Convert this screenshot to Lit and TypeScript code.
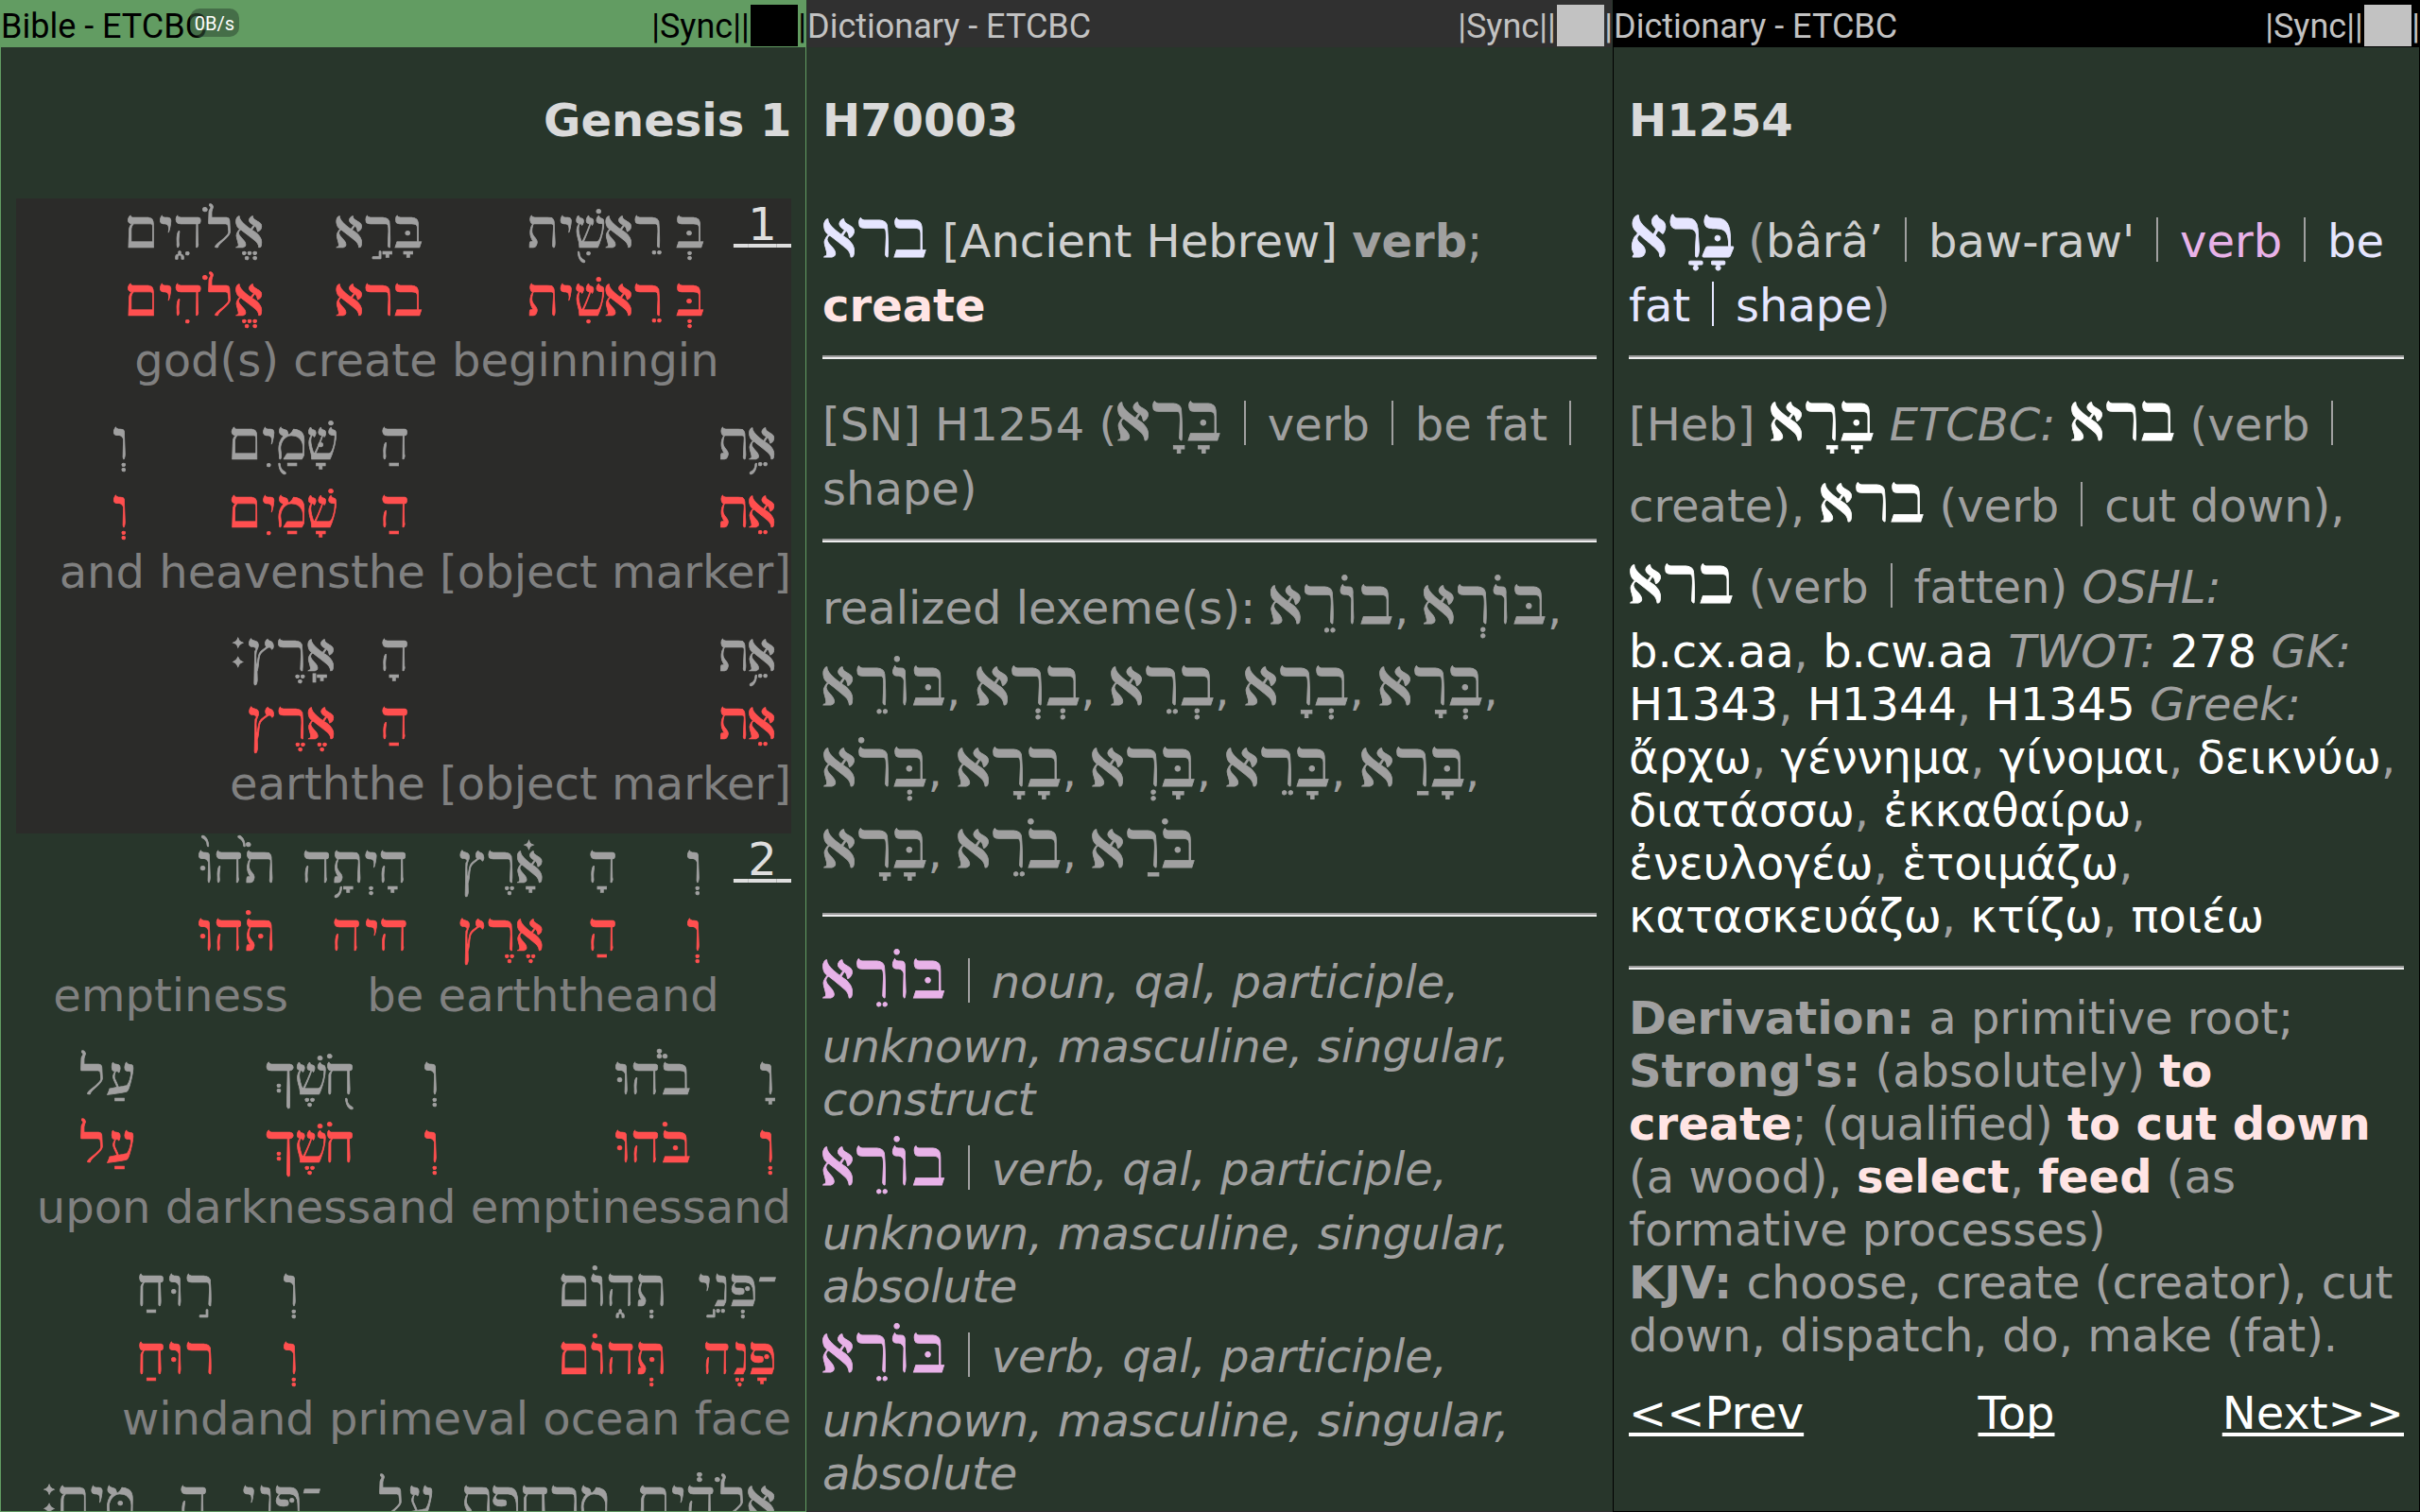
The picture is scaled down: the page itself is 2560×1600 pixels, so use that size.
import { LitElement, html, css, TemplateResult } from "lit";
import { customElement, property } from "lit/decorators.js";

type Word = { g: string; r?: string; e: string; join?: boolean; w?: number; s?: number };
type Row = { n?: string; words: Word[] };

const verses: { active?: boolean; rows: Row[] }[] = [
  {
    active: true,
    rows: [
      { n: "1", words: [
        { g: "בְּ", r: "בְּ", e: "in" },
        { g: "רֵאשִׁ֖ית", r: "רֵאשִׁית", e: "beginning", join: true },
        { g: "בָּרָ֣א", r: "ברא", e: "create" },
        { g: "אֱלֹהִ֑ים", r: "אֱלֹהִים", e: "god(s)", s: 1.035 },
      ] },
      { words: [
        { g: "אֵ֥ת", r: "אֵת", e: "[object marker]", s: 1 },
        { g: "הַ", r: "הַ", e: "the" },
        { g: "שָּׁמַ֖יִם", r: "שָׁמַיִם", e: "heavens", join: true },
        { g: "וְ", r: "וְ", e: "and" },
      ] },
      { words: [
        { g: "אֵ֥ת", r: "אֵת", e: "[object marker]", s: 1 },
        { g: "הָ", r: "הַ", e: "the" },
        { g: "אָֽרֶץ׃", r: "אֶרֶץ", e: "earth", join: true },
      ] },
    ],
  },
  {
    rows: [
      { n: "2", words: [
        { g: "וְ", r: "וְ", e: "and" },
        { g: "הָ", r: "הַ", e: "the", join: true },
        { g: "אָ֗רֶץ", r: "אֶרֶץ", e: "earth", join: true, s: 0.985 },
        { g: "הָיְתָ֥ה", r: "היה", e: "be", w: 128 },
        { g: "תֹ֨הוּ֙", r: "תֹּהוּ", e: "emptiness" },
      ] },
      { words: [
        { g: "וָ", r: "וְ", e: "and" },
        { g: "בֹ֔הוּ", r: "בֹּהוּ", e: "emptiness", join: true },
        { g: "וְ", r: "וְ", e: "and" },
        { g: "חֹ֖שֶׁךְ", r: "חֹשֶׁךְ", e: "darkness", join: true, s: 1.05 },
        { g: "עַל", r: "עַל", e: "upon", s: 1.03 },
      ] },
      { words: [
        { g: "־פְּנֵ֣י", r: "פָּנֶה", e: "face", s: 0.95 },
        { g: "תְה֑וֹם", r: "תְּהוֹם", e: "primeval ocean", s: 0.995 },
        { g: "וְ", r: "וְ", e: "and" },
        { g: "ר֣וּחַ", r: "רוּחַ", e: "wind", join: true, s: 1 },
      ] },
      { words: [
        { g: "אֱלֹהִ֔ים", e: "god(s)", w: 161, s: 1.035 },
        { g: "מְרַחֶ֖פֶת", e: "shake", w: 170 },
        { g: "עַל", e: "upon", s: 1.03 },
        { g: "־פְּנֵ֥י", e: "face", join: true, s: 0.95 },
        { g: "הַ", e: "the" },
        { g: "מָּֽיִם׃", e: "water", join: true },
      ] },
    ],
  },
];

const base = css`
  :host {
    display: block;
    box-sizing: border-box;
    font-family: "DejaVu Sans", sans-serif;
    font-size: 48px;
    line-height: 56px;
    color: #a0a0a0;
  }
  .he {
    display: inline-block;
    font-family: FreeSerif, "Liberation Serif", serif;
    line-height: 0;
    direction: rtl;
    unicode-bidi: isolate;
    white-space: nowrap;
    transform-origin: 100% 50%;
  }
`;

@customElement("pane-bar")
class PaneBar extends LitElement {
  @property() label = "";
  @property() speed = "";
  static styles = css`
    :host {
      display: flex;
      justify-content: space-between;
      position: relative;
      height: 50px;
      box-sizing: border-box;
      padding: 7px 0 0 1px;
      font: 36px/42px Roboto, sans-serif;
      white-space: pre;
      overflow: hidden;
    }
    .tools { display: flex; }
    .block {
      width: 50px;
      height: 44px;
      margin: -2px 0.5px 0 1px;
      background: currentColor;
    }
    .speed {
      position: absolute;
      left: 201px;
      top: 9px;
      width: 52px;
      height: 30px;
      border-radius: 10px;
      background: rgba(50, 80, 55, 0.6);
      color: #fff;
      font: 20px/33px Roboto, sans-serif;
      text-align: center;
    }
  `;
  render() {
    return html`<span>${this.label}</span>
      <span class="tools">|Sync||<span class="block"></span>|</span>
      ${this.speed ? html`<span class="speed">${this.speed}</span>` : ""}`;
  }
}

@customElement("bible-pane")
class BiblePane extends LitElement {
  static styles = [base, css`
    .title {
      margin: 49px 14.5px 55px;
      text-align: right;
      font-weight: bold;
      color: #dadada;
    }
    .verse { margin: 0 15px 0 16px; }
    .active { background: #2b2b29; }
    .row {
      display: flex;
      direction: rtl;
      height: 224px;
      white-space: nowrap;
    }
    .num {
      margin-top: -1px;
      height: 56px;
      white-space: pre;
      color: #dedede;
      text-decoration: underline;
      text-decoration-thickness: 4px;
      text-underline-offset: 4px;
      text-decoration-skip-ink: none;
    }
    .cell { margin-right: 15.3px; }
    .join, .first { margin-right: 0; }
    .g, .r {
      height: 70px;
      line-height: 70px;
      margin-bottom: 2px;
      padding-right: 15.3px;
      width: 0;
    }
    .he { font-size: 57px; -webkit-text-stroke: 0.7px currentColor; }
    .r { color: #ff4f4f; margin-bottom: 1px; }
    .e { direction: ltr; text-align: right; color: #808080; }
  `];
  render() {
    return html`
      <div class="title">Genesis 1</div>
      ${verses.map((v) => html`<div class="verse ${v.active ? "active" : ""}">
        ${v.rows.map((row) => html`<div class="row">
          ${row.n ? html`<div class="num">${" " + row.n + " "}</div>` : ""}
          ${row.words.map((w, i) => {
            const scale = `transform:scaleX(${w.s ?? 1.02})`;
            return html`<div
              class="cell ${w.join ? "join" : ""} ${i === 0 && !row.n ? "first" : ""}"
              style=${w.w ? `min-width:${w.w}px` : ""}>
              <div class="g"><span class="he" style=${scale}>${w.g}</span></div>
              <div class="r">${w.r ? html`<span class="he" style=${scale}>${w.r}</span>` : ""}</div>
              <div class="e">${w.e}</div>
            </div>`;
          })}
        </div>`)}
      </div>`)}`;
  }
}

const he = (t: string, cls = "", w = 111.6) =>
  html`<span class="he lex ${cls}" style="width:${w}px;transform:scaleX(${w > 120 ? 0.975 : 1.005})">${t}</span>`;
const bar = html`<span class="bar">|</span>`;
const line = (c: unknown, h = false): TemplateResult =>
  html`<div class="line ${h ? "tall" : ""}">${c}</div>`;

const dict = css`
  .title { margin: 49px 0 54px; font-weight: bold; color: #dadada; }
  .body { padding: 0 16px; white-space: pre; }
  .line { height: 56px; }
  .tall { padding: 18px 0 12px; }
  .rule {
    height: 0;
    margin: 25px 0 23px;
    border-top: 2px solid #9a9a9a;
    border-bottom: 2px solid #eee;
  }
  .lex { font-size: 69px; -webkit-text-stroke: 0.8px currentColor; }
  .bar {
    display: inline-block;
    overflow: hidden;
    width: 17.3px;
    height: 47px;
    vertical-align: -5px;
    line-height: 47px;
    -webkit-text-fill-color: transparent;
    background: linear-gradient(currentColor, currentColor) 50% 0 / 2px 100% no-repeat;
  }
  .lav { color: #e6e6ff; }
  .strong { font-weight: bold; }
  .pink { color: #e8b2e8; }
  .rose { color: #ffe4e4; font-weight: bold; }
  .lt { color: #cfcfcf; }
  .wh { color: #fff; }
  .nav { display: grid; grid-template-columns: repeat(3, 1fr); margin-top: 26px; color: #fff; }
  .nav div:nth-child(2) { text-align: center; }
  .nav div:nth-child(3) { text-align: right; }
  .nav span {
    text-decoration: underline;
    text-decoration-thickness: 4px;
    text-underline-offset: 4px;
    text-decoration-skip-ink: none;
  }
`;

@customElement("lexeme-pane")
class LexemePane extends LitElement {
  static styles = [base, dict];
  render() {
    const list = (...ws: [string, number?][]) =>
      ws.map(([t, w], i) => html`${i ? " " : ""}${he(t, "", w)},`);
    return html`<div class="body"><div class="title">H70003</div>${[
      line(html`${he("ברא", "lav")} <span class="lt">[Ancient Hebrew]</span> <b>verb</b>;`, true),
      line(html`<span class="rose">create</span>`),
      html`<div class="rule"></div>`,
      line(html`[SN] H1254 (${he("בָּרָא")} ${bar} verb ${bar} be fat ${bar}`, true),
      line("shape)"),
      html`<div class="rule"></div>`,
      line(html`realized lexeme(s): ${list(["בוֹרֵא", 131.5], ["בּוֹרְא", 131.5])}`, true),
      line(list(["בּוֹרֵא", 131], ["בְרְא"], ["בְרֵא"], ["בְרָא"], ["בְּרָא"]), true),
      line(list(["בְּרֹא"], ["בָרָא"], ["בָּרְא"], ["בָּרֵא"], ["בָּרַא"]), true),
      line(html`${list(["בָּרָא"], ["בֹרֵא"])} ${he("בֹּרַא")}`, true),
      html`<div class="rule"></div>`,
      ...[
        ["בּוֹרֵא", "noun", "construct"],
        ["בוֹרֵא", "verb", "absolute"],
        ["בּוֹרֵא", "verb", "absolute"],
      ].map(([word, kind, state]) => [
        line(html`${he(word, "pink", 130.8)} ${bar} <i>${kind}, qal, participle,</i>`, true),
        line(html`<i>unknown, masculine, singular,</i>`),
        line(html`<i>${state}</i>`),
      ]),
    ]}</div>`;
  }
}

@customElement("strong-pane")
class StrongPane extends LitElement {
  static styles = [base, dict];
  render() {
    const w = (t: string) => html`<span class="wh">${t}</span>`;
    const r = (t: string) => html`<span class="rose">${t}</span>`;
    return html`<div class="body"><div class="title">H1254</div>${[
      line(html`${he("בָּרָא", "lav strong", 111)} (<span class="lt">bârâʼ</span> ${bar} <span class="lt">baw-raw'</span> ${bar} <span class="pink">verb</span> ${bar} <span class="lav">be</span>`, true),
      line(html`<span class="lav">fat ${bar} shape</span>)`),
      html`<div class="rule"></div>`,
      line(html`[Heb] ${he("בָּרָא", "wh")} <i>ETCBC:</i> ${he("ברא", "wh")} (verb ${bar}`, true),
      line(html`create), ${he("ברא", "wh")} (verb ${bar} cut down),`, true),
      line(html`${he("ברא", "wh")} (verb ${bar} fatten) <i>OSHL:</i>`, true),
      line(html`${w("b.cx.aa")}, ${w("b.cw.aa")} <i>TWOT:</i> ${w("278")} <i>GK:</i>`),
      line(html`${w("H1343")}, ${w("H1344")}, ${w("H1345")} <i>Greek:</i>`),
      line(html`${w("ἄρχω")}, ${w("γέννημα")}, ${w("γίνομαι")}, ${w("δεικνύω")},`),
      line(html`${w("διατάσσω")}, ${w("ἐκκαθαίρω")},`),
      line(html`${w("ἐνευλογέω")}, ${w("ἑτοιμάζω")},`),
      line(html`${w("κατασκευάζω")}, ${w("κτίζω")}, ${w("ποιέω")}`),
      html`<div class="rule"></div>`,
      line(html`<b>Derivation:</b> a primitive root;`),
      line(html`<b>Strong's:</b> (absolutely) ${r("to")}`),
      line(html`${r("create")}; (qualified) ${r("to cut down")}`),
      line(html`(a wood), ${r("select")}, ${r("feed")} (as`),
      line("formative processes)"),
      line(html`<b>KJV:</b> choose, create (creator), cut`),
      line("down, dispatch, do, make (fat)."),
    ]}<div class="nav"><div><span>&lt;&lt;Prev</span></div><div><span>Top</span></div><div><span>Next&gt;&gt;</span></div></div></div>`;
  }
}

@customElement("app-root")
class AppRoot extends LitElement {
  static styles = css`
    :host { display: block; }
    .app {
      display: grid;
      grid-template-columns: 853px 853px 854px;
      width: 2560px;
      height: 1600px;
      overflow: hidden;
      background: #28362b;
    }
    .pane {
      box-sizing: border-box;
      height: 1600px;
      overflow: hidden;
      border: 1px solid;
      border-top: 0;
    }
    .pane pane-bar { margin: 0 -1px; }
    .p1 { border-color: #629c62; }
    .p2 { border-color: #28362b #28362b #303030; }
    .p3 { border-color: #000; }
    .p1 pane-bar { background: #629c62; color: #000; }
    .p2 pane-bar { background: #303030; color: #c2c2c2; }
    .p3 pane-bar { background: #000; color: #c2c2c2; }
  `;
  render() {
    return html`<div class="app">
      <div class="pane p1"><pane-bar label="Bible - ETCBC" speed="0B/s"></pane-bar><bible-pane></bible-pane></div>
      <div class="pane p2"><pane-bar label="Dictionary - ETCBC"></pane-bar><lexeme-pane></lexeme-pane></div>
      <div class="pane p3"><pane-bar label="Dictionary - ETCBC"></pane-bar><strong-pane></strong-pane></div>
    </div>`;
  }
}
